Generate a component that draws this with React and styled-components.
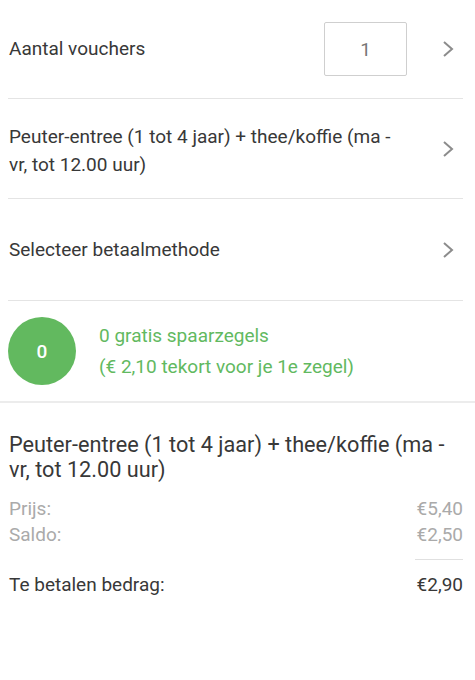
import React from "react";
import styled, { createGlobalStyle } from "styled-components";

const GlobalStyle = createGlobalStyle`
  html, body {
    margin: 0;
    padding: 0;
    background: #fff;
    font-family: Roboto, "Noto Sans", sans-serif;
    color: #333;
  }
`;

const Page = styled.div`
  width: 475px;
  display: flex;
  flex-direction: column;
`;

const Row = styled.div`
  height: ${(p) => p.$height || 100}px;
  margin-left: 8px;
  margin-right: 12px;
  border-bottom: 1px solid #e4e4e4;
  display: flex;
  align-items: center;
  gap: 16px;
  box-sizing: border-box;
`;

const RowText = styled.div`
  flex: 1;
  font-size: 19px;
  line-height: 28px;
  padding-left: 1px;
  padding-right: 14px;
  padding-top: ${(p) => (p.$nudge ? 4 : 0)}px;
  color: #383838;
`;

const CountBox = styled.div`
  width: 83px;
  height: 54px;
  box-sizing: border-box;
  border: 1px solid #cfcfcf;
  border-radius: 2px;
  display: flex;
  align-items: center;
  justify-content: center;
  font-size: 19px;
  color: #777;
  margin-right: 18px;
`;

const ChevronWrap = styled.div`
  width: 14px;
  height: 18px;
  margin-right: 8px;
  display: flex;
`;

const Chevron = () => (
  <ChevronWrap>
    <svg width="14" height="18" viewBox="0 0 14 18">
      <polyline points="3,2 11,9 3,16" fill="none" stroke="#8c8c8c" strokeWidth="2" />
    </svg>
  </ChevronWrap>
);

const StampRow = styled.div`
  height: 102px;
  border-bottom: 2px solid #ececec;
  display: flex;
  align-items: center;
  padding-left: 8px;
  gap: 23px;
  box-sizing: border-box;
`;

const StampCircle = styled.div`
  width: 68px;
  height: 68px;
  border-radius: 50%;
  background: #62b95f;
  color: #fff;
  display: flex;
  align-items: center;
  justify-content: center;
  font-size: 19px;
  font-weight: 500;
`;

const StampText = styled.div`
  color: #62b95f;
  font-size: 19px;
  line-height: 31px;
`;

const Summary = styled.div`
  padding: 29px 12px 0 9px;
  display: flex;
  flex-direction: column;
`;

const SummaryTitle = styled.div`
  font-size: 21.7px;
  line-height: 25px;
  color: #383838;
  margin-bottom: 14px;
`;

const Line = styled.div`
  display: flex;
  justify-content: space-between;
  font-size: 19px;
  line-height: 26px;
  color: ${(p) => (p.$muted ? "#aaa" : "#383838")};
`;

const ShortRule = styled.div`
  align-self: flex-end;
  width: 48px;
  height: 1px;
  background: #e0e0e0;
  margin: 11px 0 12px;
`;

export default function App() {
  return (
    <>
      <GlobalStyle />
      <Page>
        <Row $height={99}>
          <RowText>Aantal vouchers</RowText>
          <CountBox>1</CountBox>
          <Chevron />
        </Row>
        <Row>
          <RowText $nudge>Peuter-entree (1 tot 4 jaar) + thee/koffie (ma - vr, tot 12.00 uur)</RowText>
          <Chevron />
        </Row>
        <Row $height={102}>
          <RowText>Selecteer betaalmethode</RowText>
          <Chevron />
        </Row>
        <StampRow>
          <StampCircle>0</StampCircle>
          <StampText>
            0 gratis spaarzegels
            <br />
            (€ 2,10 tekort voor je 1e zegel)
          </StampText>
        </StampRow>
        <Summary>
          <SummaryTitle>Peuter-entree (1 tot 4 jaar) + thee/koffie (ma - vr, tot 12.00 uur)</SummaryTitle>
          <Line $muted>
            <span>Prijs:</span>
            <span>€5,40</span>
          </Line>
          <Line $muted>
            <span>Saldo:</span>
            <span>€2,50</span>
          </Line>
          <ShortRule />
          <Line>
            <span>Te betalen bedrag:</span>
            <span>€2,90</span>
          </Line>
        </Summary>
      </Page>
    </>
  );
}
